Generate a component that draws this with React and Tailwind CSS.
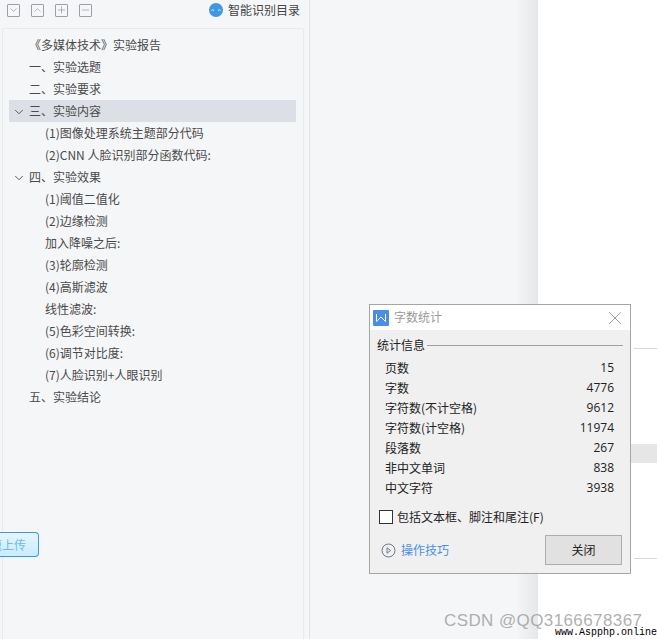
import { ChevronDown, ChevronUp, Plus, Minus, X } from "lucide-react"

const font = "font-['Microsoft_YaHei','Noto_Sans_CJK_SC','Open_Sans',sans-serif]"

const outline = [
    { text: "《多媒体技术》实验报告", indent: "pl-[20px]" },
    { text: "一、实验选题", indent: "pl-[20px]" },
    { text: "二、实验要求", indent: "pl-[20px]" },
    { text: "三、实验内容", indent: "pl-[20px]", open: true, active: true },
    { text: "(1)图像处理系统主题部分代码", indent: "pl-[36px]" },
    { text: "(2)CNN 人脸识别部分函数代码:", indent: "pl-[36px]" },
    { text: "四、实验效果", indent: "pl-[20px]", open: true },
    { text: "(1)阈值二值化", indent: "pl-[36px]" },
    { text: "(2)边缘检测", indent: "pl-[36px]" },
    { text: "加入降噪之后:", indent: "pl-[36px]" },
    { text: "(3)轮廓检测", indent: "pl-[36px]" },
    { text: "(4)高斯滤波", indent: "pl-[36px]" },
    { text: "线性滤波:", indent: "pl-[36px]" },
    { text: "(5)色彩空间转换:", indent: "pl-[36px]" },
    { text: "(6)调节对比度:", indent: "pl-[36px]" },
    { text: "(7)人脸识别+人眼识别", indent: "pl-[36px]" },
    { text: "五、实验结论", indent: "pl-[20px]" },
]

const stats = [
    ["页数", "15"],
    ["字数", "4776"],
    ["字符数(不计空格)", "9612"],
    ["字符数(计空格)", "11974"],
    ["段落数", "267"],
    ["非中文单词", "838"],
    ["中文字符", "3938"],
]

function ToolButton({ Icon }) {
    return (
        <div className="w-[13px] h-[13px] border border-[#9aa0a8] rounded-[1px] flex items-center justify-center">
            <Icon size={12} strokeWidth={1.2} className="text-[#7d838b]" />
        </div>
    )
}

function Dialog() {
    return (
        <div className="absolute left-[369px] top-[304px] w-[262px] h-[270px] border border-[#a5a5a5] bg-[#f0f0f0] flex flex-col text-[#222]">
            <div className="h-[25px] bg-white flex items-center pl-[3px] pr-[4px] shrink-0">
                <div className="w-[16px] h-[16px] rounded-[1px] bg-[#4a8ee8] flex items-center justify-center">
                    <svg width="12" height="10" viewBox="0 0 12 10" fill="none" stroke="white" strokeWidth="1">
                        <path d="M1.5 1v7.5L6 4l4.5 4.5V1" />
                    </svg>
                </div>
                <span className="ml-[5px] text-[12px] text-[#999] -translate-y-px">字数统计</span>
                <X size={22} strokeWidth={0.8} className="ml-auto text-[#777]" />
            </div>
            <div className="flex items-center pl-[7px] pr-[7px] mt-[7px] h-[16px]">
                <span className="text-[12px]">统计信息</span>
                <div className="flex-1 h-px bg-[#a0a0a0] ml-[2px]" />
            </div>
            <div className="mt-[5px] pl-[15px] pr-[16px]">
                {stats.map(([label, value]) => (
                    <div key={label} className="h-[20px] flex items-center justify-between text-[12px]">
                        <span>{label}</span>
                        <span className="font-['Open_Sans',sans-serif]">{value}</span>
                    </div>
                ))}
            </div>
            <div className="flex items-center pl-[9px] mt-[10px]">
                <div className="w-[14px] h-[14px] border border-[#333] bg-white" />
                <span className="ml-[4px] text-[12px]">包括文本框、脚注和尾注(F)</span>
            </div>
            <div className="flex items-center justify-between pl-[11px] pr-[8px] mt-[9px]">
                <div className="flex items-center">
                    <svg width="15" height="15" viewBox="0 0 15 15" fill="none" stroke="#6b7a8c" strokeWidth="1">
                        <circle cx="7.5" cy="7.5" r="6.5" />
                        <path d="M6 4.8v5.4l3.6-2.7z" />
                    </svg>
                    <span className="ml-[5px] text-[12px] text-[#4a90e2]">操作技巧</span>
                </div>
                <div className="w-[77px] h-[30px] border border-[#adadad] bg-[#e1e1e1] flex items-center justify-center text-[12px]">
                    关闭
                </div>
            </div>
        </div>
    )
}

export default function App() {
    return (
        <div className={`relative w-[657px] h-[639px] overflow-hidden flex bg-white ${font}`}>
            <div className="w-[538px] flex bg-[#f5f6f8]">
                <div className="w-[310px] shrink-0 border-r border-[#e3e4e7] pl-[2px] flex flex-col">
                    <div className="h-[28px] pb-[8px] pr-[9px] flex items-center shrink-0">
                        <div className="flex items-center gap-[11px] pl-[5px]">
                            <ToolButton Icon={ChevronDown} />
                            <ToolButton Icon={ChevronUp} />
                            <ToolButton Icon={Plus} />
                            <ToolButton Icon={Minus} />
                        </div>
                        <div className="ml-auto flex items-center">
                            <svg width="14" height="14" viewBox="0 0 14 14">
                                <circle cx="7" cy="7" r="7" fill="#3f97e8" />
                                <path d="M2.5 7.5q1.2-1.5 2.4 0M9.1 7.5q1.2-1.5 2.4 0" stroke="white" strokeWidth="1" fill="none" />
                            </svg>
                            <span className="ml-[5px] text-[12px] text-[#444]">智能识别目录</span>
                        </div>
                    </div>
                    <div className="w-[302px] flex-1 border border-b-0 border-[#e9eaed] rounded-t-[2px] pt-[5px] pl-[6px] pr-[7px] text-[12px] text-[#4a4a4a]">
                        {outline.map((item) => (
                            <div
                                key={item.text}
                                className={`relative h-[22px] flex items-center ${item.indent} ${item.active ? "bg-[#dcdfe5]" : ""}`}
                            >
                                {item.open && (
                                    <ChevronDown size={14} strokeWidth={1.5} className="absolute left-[3px] top-[5px] text-[#444]" />
                                )}
                                <span>{item.text}</span>
                            </div>
                        ))}
                    </div>
                </div>
                <div className="flex-1 bg-gradient-to-r from-[#f5f6f8] from-90% to-[#e6e7e9]" />
            </div>
            <div className="flex-1 flex flex-col items-end">
                <div className="mt-[348px] w-[23px] h-px bg-[#d8d8d8]" />
                <div className="mt-[95px] w-[30px] h-[19px] bg-[#e6e6e6]" />
                <div className="mt-[95px] w-[23px] h-px bg-[#d8d8d8]" />
            </div>
            <div className="absolute left-0 top-[532px] w-[39px] h-[25px] border border-l-0 border-[#3a9ae6] rounded-r-[4px] bg-gradient-to-b from-[#e6f6ff] to-[#c8ecff] flex items-center justify-end pr-[12px] overflow-hidden">
                <span className="text-[12px] text-[#6cbcec] whitespace-nowrap">极速上传</span>
            </div>
            <Dialog />
            <div className="absolute left-[444px] top-[610px] text-[17px] leading-[22px] tracking-[0.4px] text-[#9a9a9a]/80 font-['Liberation_Sans',sans-serif]">
                CSDN @QQ3166678367
            </div>
            <div className="absolute left-[555px] top-[626px] text-[10px] leading-[14px] text-black font-['Liberation_Mono',monospace]">
                www.Aspphp.online
            </div>
        </div>
    )
}
